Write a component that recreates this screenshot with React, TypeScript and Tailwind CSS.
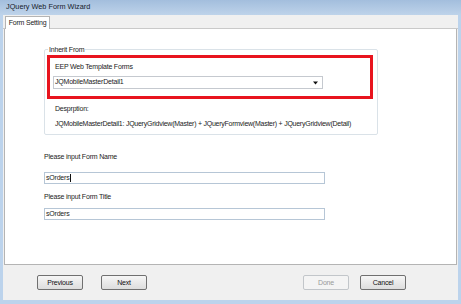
import React from 'react';

const font = { fontFamily: '"Liberation Sans", Arial, sans-serif' };

const WinButton: React.FC<{ label: string; disabled?: boolean }> = ({ label, disabled }) => (
  <button
    className={`w-[46px] h-[15px] rounded-[2px] border text-[7px] leading-none tracking-[-0.2px] ${
      disabled
        ? 'border-[#c2c6ca] bg-[#f4f4f4] text-[#9a9a9a]'
        : 'border-[#707070] bg-gradient-to-b from-[#f6f6f6] to-[#dddddd] text-[#111]'
    }`}
  >
    {label}
  </button>
);

const App: React.FC = () => {
  return (
    <div style={font} className="w-[461px] h-[304px] bg-[#bcd3ec] flex flex-col overflow-hidden text-[#1b1b1b]">
      {/* title bar */}
      <div className="h-[15px] shrink-0 bg-gradient-to-b from-[#a3bedd] to-[#bed3ea] flex items-center pl-[6px] text-[7.3px] text-[#16202c]">
        JQuery Web Form Wizard
      </div>

      <div className="flex-1 mx-[3px] mb-[4px] bg-[#f0f0f0] flex flex-col">
        {/* tab strip */}
        <div className="h-[14px] shrink-0 flex items-end pl-[2px] border-b border-[#c9c9c9]">
          <div className="h-[13px] w-[45px] bg-white border border-b-0 border-[#b4b4b4] text-[7px] tracking-[-0.2px] flex items-center justify-center -mb-px">
            Form Setting
          </div>
        </div>

        {/* tab page */}
        <div className="h-[236px] shrink-0 mx-[1px] bg-white border border-t-0 border-[#b4b4b4] pl-[39px] pt-[16px] text-[7px] tracking-[-0.2px]">
          <fieldset className="w-[334px] h-[90px] border border-[#dae2e8] rounded-[2px] pl-[2px] pt-[1px]">
            <legend className="ml-[1px] px-[1px] text-[7px] leading-[9px]">Inherit From</legend>
            <div className="w-[326px] h-[44px] border-[3px] border-[#e8141e] pl-[3px] pt-[3px]">
              <div className="h-[12px] flex items-center pl-[2px]">EEP Web Template Forms</div>
              <div className="mt-[3px] w-[270px] h-[13px] border border-[#c5c9cf] bg-white flex items-center justify-between pl-[1px] pr-[4px]">
                <span>JQMobileMasterDetail1</span>
                <svg width="5" height="4" viewBox="0 0 5 4">
                  <path d="M0 0.5h5L2.5 3.5z" fill="#111" />
                </svg>
              </div>
            </div>
            <div className="pl-[8px] mt-[5px] h-[10px] flex items-center">Desprption:</div>
            <div className="pl-[8px] mt-[5px] h-[10px] flex items-center whitespace-nowrap tracking-[-0.25px]">
              JQMobileMasterDetail1: JQueryGridview(Master) + JQueryFormview(Master) + JQueryGridview(Detail)
            </div>
          </fieldset>

          <div className="mt-[17px] h-[10px] flex items-center">Please input Form Name</div>
          <div className="mt-[10px] w-[281px] h-[12px] border border-[#b6c6d6] bg-white flex items-center pl-[1px]">
            sOrders<span className="w-px h-[8px] bg-[#111]" />
          </div>
          <div className="mt-[8px] h-[10px] flex items-center">Please input Form Title</div>
          <div className="mt-[6px] w-[281px] h-[12px] border border-[#b6c6d6] bg-white flex items-center pl-[1px]">
            sOrders
          </div>
        </div>

        {/* buttons */}
        <div className="flex-1 flex items-center pl-[34px] pr-[52px] pb-[1px]">
          <div className="flex gap-[18px]">
            <WinButton label="Previous" />
            <WinButton label="Next" />
          </div>
          <div className="flex-1" />
          <div className="flex gap-[11px]">
            <WinButton label="Done" disabled />
            <WinButton label="Cancel" />
          </div>
        </div>
      </div>
    </div>
  );
};

export default App;
